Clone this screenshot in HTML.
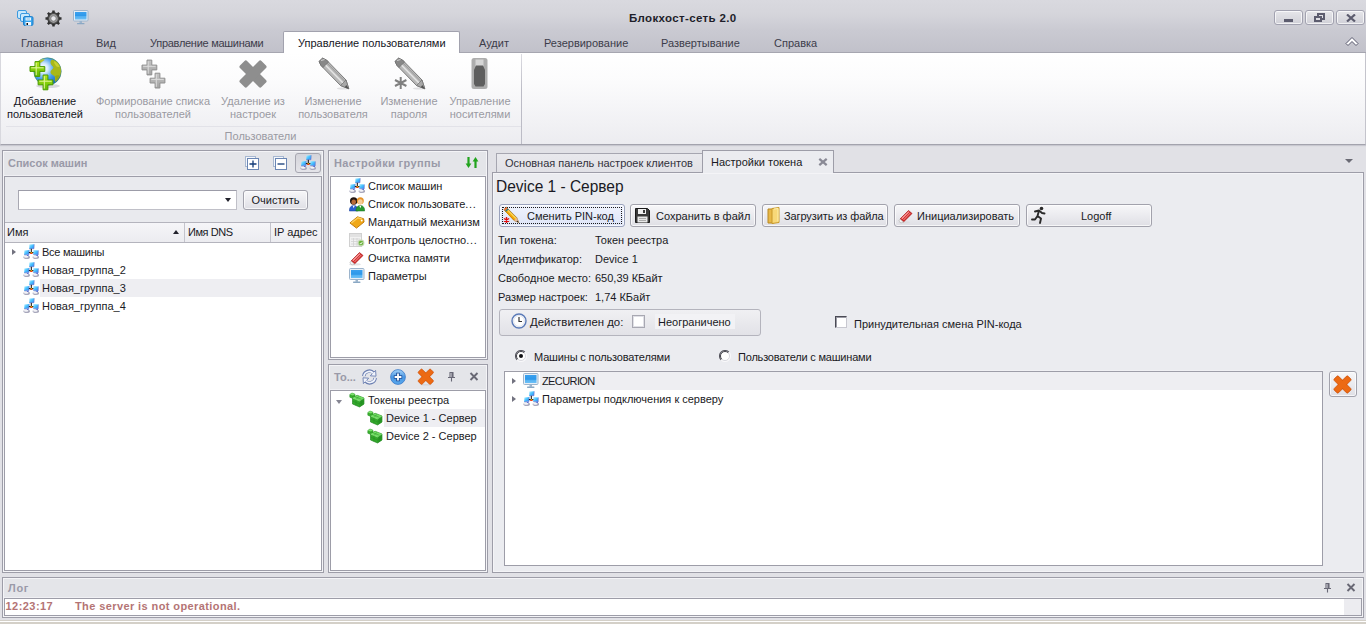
<!DOCTYPE html>
<html><head><meta charset="utf-8">
<style>
*{box-sizing:border-box;margin:0;padding:0}
html,body{width:1366px;height:624px;overflow:hidden}
body{position:relative;background:#e1e1e6;font-family:"Liberation Sans","DejaVu Sans",sans-serif;font-size:11px;color:#1a1a24;line-height:13px}
.a{position:absolute}
.t{position:absolute;white-space:nowrap}
#title{left:0;top:0;width:1366px;height:53px;background:linear-gradient(#d9d9df 0,#d5d5db 14px,#cacad2 30px,#c1c1ca 52px);border-bottom:1px solid #a6a6b0}
#ribbon{left:0;top:53px;width:1366px;height:92px;border-left:1px solid #d8d8de;border-right:1px solid #c4c4cc;box-shadow:0 1px 1px #c8c8d0;background:linear-gradient(#ffffff 0,#fbfbfc 30px,#ececf0 100%);border-bottom:1px solid #a3a3ad}
.tab{position:absolute;top:37px;white-space:nowrap;color:#3c3c4a;font-size:11px}
.rb{position:absolute;text-align:center;white-space:nowrap;color:#9a9aa2;font-size:11px;line-height:13px}
.panel{position:absolute;background:#e4e5e9;border:1px solid #9d9da8;box-shadow:inset 0 0 0 1px #f4f4f7}
.inner{position:absolute;background:#fff;border:1px solid #9d9da8;box-shadow:0 -1px 0 #f0f0f4}
.cap{margin-top:1px;position:absolute;white-space:nowrap;font-weight:bold;color:#9a9aa8;font-size:11px}
.btn{position:absolute;border:1px solid #a2a2ac;border-radius:3px;box-shadow:inset 0 0 0 1px rgba(255,255,255,0.7);background:linear-gradient(#f7f7f9,#dfdfe5);white-space:nowrap}
</style></head><body>
<svg width="0" height="0" style="position:absolute"><defs>
<symbol id="net" viewBox="0 0 16 16"><linearGradient id="ng" x1="0" y1="0" x2="1" y2="1"><stop offset="0" stop-color="#b4f0ff"/><stop offset="0.450" stop-color="#4cc4ff"/><stop offset="1" stop-color="#2a80f4"/></linearGradient>
<ellipse cx="3.700" cy="13.200" rx="3.300" ry="1.800" fill="#a8a8bc"/><ellipse cx="3.100" cy="12.700" rx="2.300" ry="1" fill="#f4f4f8"/>
<ellipse cx="12.900" cy="13.200" rx="3.300" ry="1.800" fill="#a8a8bc"/><ellipse cx="12.300" cy="12.700" rx="2.300" ry="1" fill="#f4f4f8"/>
<path d="M6.400 0.500L11.200 0.200L11 4.700L6.200 4.900z" fill="url(#ng)"/><path d="M11.200 0.200L11 4.700L6.200 4.900" stroke="#7878c8" stroke-width="0.600" fill="none"/>
<path d="M1.400 6.400L6.200 6.100L6 10.600L1.100 10.900z" fill="url(#ng)"/><path d="M6.200 6.100L6 10.600L1.100 10.900" stroke="#7878c8" stroke-width="0.600" fill="none"/>
<path d="M10.400 6.100L15.400 6.400L15.200 10.900L10.200 10.600z" fill="url(#ng)"/><path d="M15.400 6.400L15.200 10.900L10.200 10.600" stroke="#7878c8" stroke-width="0.600" fill="none"/>
<path d="M8.300 4.800V8.600M5.900 8.600H10.400" stroke="#0a0a0a" stroke-width="1" fill="none"/>
<path d="M7.200 9h2.300v1H7.200z" fill="#e82010"/><path d="M7.500 8.100h1.700v1.100H7.500z" fill="#f4b400"/>
<rect x="4.400" y="11" width="1" height="1" fill="#1030d0"/><rect x="13.600" y="11" width="1" height="1" fill="#1030d0"/></symbol>
<symbol id="tok" viewBox="0 0 16 16">
<path d="M0.800 2.500L3 1L6 2.200L6 5L3.800 6.500L0.800 5.200z" fill="#3cb030" stroke="#1e8a1e" stroke-width="0.500"/><path d="M0.800 2.500L3 1L6 2.200L3.800 3.600z" fill="#7ee070"/><path d="M3.800 3.600V6.500" stroke="#1e8a1e" stroke-width="0.500"/>
<path d="M3.500 6L8 3.200L15 6V12L10.500 15L3.500 12z" fill="#34a82c" stroke="#1a7e1a" stroke-width="0.600" stroke-linejoin="round"/>
<path d="M3.500 6L8 3.200L15 6L10.500 9z" fill="#72dc64"/><path d="M10.500 9V15L15 12V6z" fill="#2a9826"/>
<path d="M5.700 4.600L12.700 7.500M10.200 4.100L7 7.500M7 7.500V13.500M3.500 9L10.500 12L15 9M12.700 7.500V13.500" stroke="#1e8a1e" stroke-width="0.450" fill="none"/>
<path d="M3.500 6L10.500 9L15 6" stroke="#a8f09a" stroke-width="0.500" fill="none"/></symbol>
</defs></svg>
<!-- TITLE -->
<div class="a" id="title"></div>
<div class="t" style="left:629px;top:12px;font-weight:bold;font-size:11.500px;line-height:13px;letter-spacing:0.350px;color:#1e1e2a">Блокхост-сеть 2.0</div>
<div class="tab" style="left:21px">Главная</div>
<div class="tab" style="left:96px">Вид</div>
<div class="tab" style="left:150px;letter-spacing:-0.280px">Управление машинами</div>
<div class="a" style="left:283px;top:31px;width:177px;height:22px;background:#fff;border:1px solid #a2a2ae;border-bottom:none;border-radius:2px 2px 0 0"></div>
<div class="tab" style="left:298px;color:#16161e">Управление пользователями</div>
<div class="tab" style="left:479px">Аудит</div>
<div class="tab" style="left:544px">Резервирование</div>
<div class="tab" style="left:661px">Развертывание</div>
<div class="tab" style="left:774px">Справка</div>
<!-- RIBBON -->
<div class="a" id="ribbon"></div>
<div class="a" style="left:284px;top:52px;width:175px;height:1px;background:#fff"></div>
<!-- window buttons -->
<div class="btn" style="left:1274px;top:10px;width:29px;height:15px;border-color:#a2a2b0;background:linear-gradient(#e6e6ea,#d0d0d7)"><div class="a" style="left:9px;top:8px;width:9px;height:3px;background:#5c5c6e"></div></div>
<div class="btn" style="left:1305px;top:10px;width:29px;height:15px;border-color:#a2a2b0;background:linear-gradient(#e6e6ea,#d0d0d7)">
<div class="a" style="left:11px;top:2px;width:8px;height:7px;border:2px solid #5c5c6e"></div>
<div class="a" style="left:8px;top:5px;width:8px;height:6px;border:2px solid #5c5c6e;background:#dcdce2"></div></div>
<div class="btn" style="left:1336px;top:10px;width:29px;height:15px;border-color:#a2a2b0;background:linear-gradient(#e6e6ea,#d0d0d7)">
<svg class="a" style="left:8px;top:3px" width="12" height="8" viewBox="0 0 12 8"><path d="M2 0.500L10 7.500M10 0.500L2 7.500" stroke="#5c5c6e" stroke-width="2.200"/></svg></div>
<svg class="a" style="left:1345px;top:36px" width="14" height="11" viewBox="0 0 14 11"><path d="M1 7.500L7 1.500L13 7.500L11 9.500L7 5.500L3 9.500z" fill="#fff" stroke="#55556a" stroke-width="1" stroke-linejoin="round"/></svg>
<!-- quick access icons -->
<svg class="a" style="left:16px;top:9px" width="18" height="17" viewBox="0 0 18 17">
<rect x="1.500" y="1.500" width="9" height="8" rx="1.500" fill="#c8e8fc" stroke="#3a9ae0"/>
<rect x="4.500" y="4.500" width="9" height="8" rx="1.500" fill="#c8e8fc" stroke="#3a9ae0"/>
<rect x="7.500" y="7.500" width="9.500" height="9" rx="1.500" fill="#38a4ec" stroke="#1f80cc"/>
<rect x="9.500" y="8.500" width="5.500" height="3" fill="#e8f4fc"/><path d="M10.500 10h3.500" stroke="#58a8e0" stroke-width="0.700"/><rect x="9.500" y="13" width="5.500" height="3.500" fill="#f4f8fc"/><rect x="10.500" y="14" width="1.500" height="2" fill="#101010"/></svg>
<svg class="a" style="left:44.500px;top:9.500px" width="17" height="17" viewBox="0 0 17 17"><path d="M16.51 7.30L16.51 9.70L14.66 9.83L13.79 11.92L15.02 13.31L13.31 15.02L11.92 13.79L9.83 14.66L9.70 16.51L7.30 16.51L7.17 14.66L5.08 13.79L3.69 15.02L1.98 13.31L3.21 11.92L2.34 9.83L0.49 9.70L0.49 7.30L2.34 7.17L3.21 5.08L1.98 3.69L3.69 1.98L5.08 3.21L7.17 2.34L7.30 0.49L9.70 0.49L9.83 2.34L11.92 3.21L13.31 1.98L15.02 3.69L13.79 5.08L14.66 7.17z" fill="#303030"/><circle cx="8.500" cy="8.500" r="5" fill="#9c9c9c" stroke="#4a4a4a" stroke-width="1.200"/><circle cx="8.500" cy="8.500" r="2.700" fill="#e6e6ea" stroke="#6a6a6a" stroke-width="0.700"/></svg>
<svg class="a" style="left:73px;top:10px" width="16" height="15" viewBox="0 0 16 15">
<defs><linearGradient id="scr" x1="0" y1="0" x2="0" y2="1"><stop offset="0" stop-color="#3aa0ee"/><stop offset="0.550" stop-color="#2c98ea"/><stop offset="0.600" stop-color="#52b0f2"/><stop offset="1" stop-color="#6cc0f6"/></linearGradient></defs>
<rect x="0.500" y="0.500" width="14.500" height="10.500" rx="1" fill="#e4edf6" stroke="#9cb4cc"/>
<rect x="2" y="2" width="11.500" height="7.500" fill="url(#scr)"/>
<rect x="6.500" y="11" width="2.500" height="2" fill="#9cb4cc"/><rect x="4" y="13" width="7.500" height="1.200" rx="0.500" fill="#8aa8c4"/></svg>
<!-- ribbon big icons -->
<svg class="a" style="left:0;top:54px" width="530" height="42" viewBox="0 54 530 42">
<defs><radialGradient id="gl" cx="0.35" cy="0.38" r="0.65"><stop offset="0" stop-color="#ffffff"/><stop offset="0.25" stop-color="#d8ecfc"/><stop offset="0.6" stop-color="#4aa0ea"/><stop offset="1" stop-color="#1268c8"/></radialGradient>
<linearGradient id="gp" x1="0" y1="0" x2="0" y2="1"><stop offset="0" stop-color="#b4e81a"/><stop offset="1" stop-color="#5cb800"/></linearGradient>
<linearGradient id="gg" x1="0" y1="0" x2="0" y2="1"><stop offset="0" stop-color="#c4c4c4"/><stop offset="1" stop-color="#a4a4a4"/></linearGradient></defs>
<ellipse cx="48" cy="86" rx="12" ry="2" fill="#d8d8dc"/>
<circle cx="47.500" cy="71.500" r="13.700" fill="url(#gl)" stroke="#3a8a5a" stroke-width="0.600"/>
<path d="M52 59.500c3 0.500 6 2.500 7.500 5.500c1.500 3 2 6 1 9.500c-1 3-3 6-5.500 7.500c-0.500-2 0.500-4-0.500-6c-1.500-1-4-1.500-4-4c0-2 2.500-2.500 3-4.500c-1-2-3-2.500-3-5c0-1.500 0.500-2.500 1.500-3z" fill="#a8b818"/>
<path d="M54 61c2.500 1 4.500 3 5.500 5.500c-1 1-2.500 0.500-3.500-0.500c-1-1.500-2-3-2-5z" fill="#c8d030"/>
<path d="M38 61.500c2-1.500 4.500-2.500 6.500-2c0 1-1.500 1.500-2.500 2.500c-1 1-2.500 1-4-0.500z" fill="#b8c828"/>
<path d="M55 76c1 1.500 1 3.500 0 5.500c2-1.500 3.500-3.500 4.500-6c-1.500-0.500-3-0.500-4.500 0.500z" fill="#98a810"/>
<path d="M35.0 61.6L39.8 61.6L39.8 66.6L44.8 66.6L44.8 71.4L39.8 71.4L39.8 76.4L35.0 76.4L35.0 71.4L30.0 71.4L30.0 66.6L35.0 66.6z" fill="url(#gp)" stroke="#4a9a00" stroke-width="1" stroke-linejoin="round"/><path d="M31.2 67.8h12.4M36.2 62.8v12.4" stroke="#e4f8a0" stroke-width="1" fill="none"/><path d="M43.1 75.0L47.9 75.0L47.9 80.0L52.9 80.0L52.9 84.8L47.9 84.8L47.9 89.8L43.1 89.8L43.1 84.8L38.1 84.8L38.1 80.0L43.1 80.0z" fill="url(#gp)" stroke="#4a9a00" stroke-width="1" stroke-linejoin="round"/><path d="M39.3 81.2h12.4M44.3 76.2v12.4" stroke="#e4f8a0" stroke-width="1" fill="none"/><path d="M147.0 60.1L151.8 60.1L151.8 65.1L156.8 65.1L156.8 69.9L151.8 69.9L151.8 74.9L147.0 74.9L147.0 69.9L142.0 69.9L142.0 65.1L147.0 65.1z" fill="url(#gg)" stroke="#909090" stroke-width="1" stroke-linejoin="round"/><path d="M143.2 66.3h12.4M148.2 61.3v12.4" stroke="#dcdcdc" stroke-width="1" fill="none"/><path d="M155.1 73.2L159.9 73.2L159.9 78.2L164.9 78.2L164.9 83.0L159.9 83.0L159.9 88.0L155.1 88.0L155.1 83.0L150.1 83.0L150.1 78.2L155.1 78.2z" fill="url(#gg)" stroke="#909090" stroke-width="1" stroke-linejoin="round"/><path d="M151.3 79.4h12.4M156.3 74.4v12.4" stroke="#dcdcdc" stroke-width="1" fill="none"/>
<g transform="translate(253 74) rotate(45)"><rect x="-15.200" y="-5" width="30.400" height="10" rx="1.800" fill="#8e8e8e"/><rect x="-5" y="-15.200" width="10" height="30.400" rx="1.800" fill="#8e8e8e"/></g>
<g id="pen"><ellipse cx="343" cy="88.500" rx="6" ry="1" fill="#e0e0e2"/>
<path d="M319 61.500L322.500 58.200L326.500 60L346 80L348.800 88.800L340.500 85.500L321 65.500z" fill="#b8b8b8" stroke="#707070" stroke-width="0.900" stroke-linejoin="round"/>
<path d="M322 61.500L343.500 83.500" stroke="#e4e4e4" stroke-width="1.600"/><path d="M324.500 60.500L345 81.500" stroke="#9a9a9a" stroke-width="1"/>
<path d="M319 61.500L322.500 58.200L326.500 60L328.500 62L323 67.500L321 65.500z" fill="#888" stroke="#6a6a6a" stroke-width="0.600"/>
<path d="M321 60.500L324.500 59.500" stroke="#d0d0d0" stroke-width="1.200"/>
<path d="M346 80L340.500 85.500L348.800 88.800z" fill="#a8a8a8" stroke="#707070" stroke-width="0.700"/>
<path d="M346.300 85L348.800 88.800L344.800 87.200z" fill="#505050"/></g>
<use href="#pen" x="76" y="0"/>
<path d="M400.700 77v12M395 80l11.400 6M406.400 80l-11.400 6" stroke="#808080" stroke-width="2"/>
<rect x="471.500" y="58" width="16" height="31" rx="2.500" fill="#adadad"/>
<rect x="475.500" y="59.500" width="8" height="7" fill="#d6d6d6"/>
<path d="M474 70l2-4.500h7l2 4.500v14l-1.500 2.500h-8L474 84z" fill="#5e5e5e"/>
</svg>
<!-- ribbon labels -->
<div class="rb" style="left:0;top:95px;width:90px;color:#16161e">Добавление<br>пользователей</div>
<div class="rb" style="left:93px;top:95px;width:120px">Формирование списка<br>пользователей</div>
<div class="rb" style="left:213px;top:95px;width:80px">Удаление из<br>настроек</div>
<div class="rb" style="left:293px;top:95px;width:80px">Изменение<br>пользователя</div>
<div class="rb" style="left:369px;top:95px;width:80px">Изменение<br>пароля</div>
<div class="rb" style="left:440px;top:95px;width:80px">Управление<br>носителями</div>
<div class="a" style="left:6px;top:126px;width:515px;height:1px;background:#e2e2e8"></div>
<div class="rb" style="left:0;top:130px;width:521px">Пользователи</div>
<div class="a" style="left:521px;top:54px;width:1px;height:90px;background:linear-gradient(#dcdce2,#bcbcc6 40%)"></div>
<!--RIBBONCONTENT-->
<!-- LEFT PANEL -->
<div class="panel" style="left:2px;top:150px;width:322px;height:423px"></div>
<div class="cap" style="left:8px;top:156px">Список машин</div>
<div class="inner" style="left:4px;top:176px;width:318px;height:395px;background:#e9eaee"></div>
<div class="a" style="left:5px;top:243px;width:316px;height:327px;background:#fff"></div>
<div class="a" style="left:18px;top:190px;width:219px;height:20px;background:#fff;border:1px solid #c0c0c8;border-top-color:#9c9ca8;border-left-color:#a8a8b2"></div>
<div class="a" style="left:225px;top:198px;border:3.5px solid transparent;border-top:4px solid #22222c;border-bottom:none"></div>
<div class="btn" style="left:243px;top:190px;width:65px;height:20px;text-align:center;line-height:18px">Очистить</div>
<div class="a" style="left:5px;top:223px;width:316px;height:19px;background:linear-gradient(#f5f5f8,#ececf0)"></div><div class="a" style="left:5px;top:222px;width:316px;height:1px;background:#b4b4bd"></div>
<div class="a" style="left:5px;top:242px;width:316px;height:1px;background:#b4b4bd"></div>
<div class="a" style="left:184px;top:223px;width:1px;height:19px;background:#c4c4cc"></div>
<div class="a" style="left:270px;top:223px;width:1px;height:19px;background:#c4c4cc"></div>
<div class="t" style="left:7px;top:226px">Имя</div>
<div class="t" style="left:188px;top:226px;letter-spacing:-0.450px">Имя DNS</div>
<div class="t" style="left:274px;top:226px">IP адрес</div>
<div class="a" style="left:173px;top:230px;border:3.5px solid transparent;border-bottom:4px solid #22222c;border-top:none"></div>
<div class="a" style="left:40px;top:279px;width:281px;height:18px;background:#eeeef2"></div>
<div class="a" style="left:12px;top:249px;border:3.500px solid transparent;border-left:4px solid #72727f;border-right:none"></div>
<div class="t" style="left:42px;top:246px;letter-spacing:-0.250px">Все машины</div>
<div class="t" style="left:42px;top:264px">Новая_группа_2</div>
<div class="t" style="left:42px;top:282px">Новая_группа_3</div>
<div class="t" style="left:42px;top:300px">Новая_группа_4</div>
<svg class="a" style="left:23px;top:244px" width="16" height="16"><use href="#net"/></svg>
<svg class="a" style="left:23px;top:262px" width="16" height="16"><use href="#net"/></svg>
<svg class="a" style="left:23px;top:280px" width="16" height="16"><use href="#net"/></svg>
<svg class="a" style="left:23px;top:298px" width="16" height="16"><use href="#net"/></svg>
<!-- caption buttons left -->
<svg class="a" style="left:245px;top:156px" width="14" height="14" viewBox="0 0 14 14"><rect x="0.500" y="0.500" width="10" height="10" fill="#f4f7fc" stroke="#a8b8d0"/><rect x="2.500" y="2.500" width="11" height="11" fill="#fff" stroke="#6a86b4"/><path d="M8 4.500v7M4.500 8h7" stroke="#123a78" stroke-width="1.300"/></svg>
<svg class="a" style="left:273px;top:156px" width="14" height="14" viewBox="0 0 14 14"><rect x="0.500" y="0.500" width="10" height="10" fill="#f4f7fc" stroke="#a8b8d0"/><rect x="2.500" y="2.500" width="11" height="11" fill="#fff" stroke="#6a86b4"/><path d="M4.500 8h7" stroke="#123a78" stroke-width="1.300"/></svg>
<div class="a" style="left:295px;top:153px;width:26px;height:20px;border:1px solid #a6a6b0;border-radius:3px;background:linear-gradient(#d4d4da,#e4e4e9)"></div>
<svg class="a" style="left:300px;top:155px" width="16" height="16"><use href="#net"/></svg>
<!-- MIDDLE TOP PANEL -->
<div class="panel" style="left:328px;top:150px;width:160px;height:210px"></div>
<div class="cap" style="left:334px;top:156px;letter-spacing:0.35px">Настройки группы</div>
<div class="inner" style="left:330px;top:176px;width:156px;height:182px"></div>
<svg class="a" style="left:465px;top:156px" width="14" height="13" viewBox="0 0 14 13"><path d="M3.500 1v8" stroke="#22a41e" stroke-width="2.200"/><path d="M0.600 7.500h5.800L3.500 12z" fill="#22a41e"/><path d="M10.500 12V4" stroke="#22a41e" stroke-width="2.200"/><path d="M7.600 5.500h5.800L10.500 1z" fill="#22a41e"/></svg>
<div class="t" style="left:368px;top:180px">Список машин</div>
<div class="t" style="left:368px;top:198px">Список пользовате<span style="letter-spacing:0.700px">...</span></div>
<div class="t" style="left:368px;top:216px">Мандатный механизм</div>
<div class="t" style="left:368px;top:234px">Контроль целостно<span style="letter-spacing:0.700px">...</span></div>
<div class="t" style="left:368px;top:252px">Очистка памяти</div>
<div class="t" style="left:368px;top:270px">Параметры</div>
<svg class="a" style="left:349px;top:178px" width="16" height="16"><use href="#net"/></svg>
<svg class="a" style="left:349px;top:196px" width="16" height="16" viewBox="0 0 16 16">
<path d="M0.300 15c0-3.600 1.700-5.500 4.400-5.500s4.400 1.900 4.400 5.500z" fill="#2860d0" stroke="#1a3e98" stroke-width="0.500"/><path d="M3.700 9.800l1 2.400l1-2.400z" fill="#fff"/>
<circle cx="4.700" cy="5" r="3.700" fill="#201410"/><ellipse cx="4.700" cy="6" rx="2.300" ry="2.600" fill="#b86a38"/>
<path d="M6.900 15c0-3.600 1.700-5.500 4.400-5.500s4.400 1.900 4.400 5.500z" fill="#2a9a30" stroke="#1a6e20" stroke-width="0.500"/><path d="M10.300 9.800l1 2.400l1-2.400z" fill="#fff"/>
<circle cx="11.300" cy="4.800" r="3.500" fill="#e89428"/><ellipse cx="11.300" cy="5.800" rx="2.400" ry="2.600" fill="#f6cc98"/></svg>
<svg class="a" style="left:349px;top:214px" width="16" height="16" viewBox="0 0 17 16"><path d="M1 9L9 2.500L15.500 4.500L16 8L8 14.500z" fill="#f0a818" stroke="#c07808" stroke-width="1" stroke-linejoin="round"/><path d="M2.500 9L9.500 3.500L14 5" stroke="#fbd060" stroke-width="1.400" fill="none"/><circle cx="13.500" cy="6.500" r="1" fill="#fff"/></svg>
<svg class="a" style="left:349px;top:232px" width="16" height="16" viewBox="0 0 16 16"><rect x="0.500" y="1.500" width="12" height="13" fill="#f2f2f2" stroke="#d0d0d0"/><rect x="1" y="2" width="11" height="3" fill="#e2e2e2"/><path d="M2 7h9M2 9.500h9M2 12h9M4.500 6v8M8 6v8" stroke="#d2d2d2" stroke-width="0.800"/><circle cx="12" cy="11" r="3.400" fill="#c4d8b4"/><circle cx="12" cy="11" r="2.300" fill="#6cb43c"/><path d="M10.800 11l1 1.100l1.500-2" stroke="#fff" stroke-width="0.900" fill="none"/></svg>
<svg class="a" style="left:349px;top:250px" width="16" height="16" viewBox="0 0 16 16"><ellipse cx="6" cy="14.300" rx="6" ry="1.200" fill="#e4e4e6"/><path d="M2 11L10.500 2.500L14 5.500L5.500 14z" fill="#d42424" stroke="#a81818" stroke-width="0.700" stroke-linejoin="round"/><path d="M3.800 10.800L11 3.600" stroke="#f8a0a0" stroke-width="1.300"/><path d="M5.500 12L12.300 5" stroke="#f4d0d0" stroke-width="0.700"/><path d="M2 11L5.500 14L3 15L0.800 13z" fill="#f4f4f4" stroke="#b0b0b0" stroke-width="0.600" stroke-linejoin="round"/></svg>
<svg class="a" style="left:349px;top:268px" width="16" height="16" viewBox="0 0 16 16"><rect x="0.500" y="0.500" width="14.500" height="11" rx="1" fill="#e8eff6" stroke="#9cb4cc"/><rect x="2" y="2" width="11.500" height="8" fill="url(#scr)"/><rect x="6.500" y="11.500" width="2.500" height="2.300" fill="#9cb4cc"/><rect x="4" y="13.600" width="7.500" height="1.300" rx="0.600" fill="#8aa8c4"/></svg>
<!-- MIDDLE BOTTOM PANEL -->
<div class="panel" style="left:328px;top:364px;width:160px;height:209px"></div>
<div class="cap" style="left:334px;top:370px">То...</div>
<div class="inner" style="left:330px;top:390px;width:156px;height:181px"></div>
<div class="a" style="left:384px;top:409px;width:101px;height:18px;background:#eeeef2"></div>
<div class="a" style="left:336px;top:400px;border:3.500px solid transparent;border-top:4px solid #858592;border-bottom:none"></div>
<div class="t" style="left:368px;top:394px">Токены реестра</div>
<div class="t" style="left:386px;top:412px">Device 1 - Сервер</div>
<div class="t" style="left:386px;top:430px">Device 2 - Сервер</div>
<svg class="a" style="left:349px;top:392px" width="16" height="16"><use href="#tok"/></svg>
<svg class="a" style="left:367px;top:410px" width="16" height="16"><use href="#tok"/></svg>
<svg class="a" style="left:367px;top:428px" width="16" height="16"><use href="#tok"/></svg>
<svg class="a" style="left:361px;top:369px" width="17" height="16" viewBox="0 0 17 16"><g fill="none" stroke-linecap="butt"><path d="M2.800 7.200A5.600 5.600 0 0 1 12.600 4" stroke="#6a7eb0" stroke-width="3.400"/><path d="M14.200 8.800A5.600 5.600 0 0 1 4.400 12" stroke="#6a7eb0" stroke-width="3.400"/></g><path d="M9.300 6.800L15 7.200L14.600 1.400z" fill="#f2f5fc" stroke="#6a7eb0" stroke-width="0.900" stroke-linejoin="round"/><path d="M7.700 9.200L2 8.800L2.400 14.600z" fill="#f2f5fc" stroke="#6a7eb0" stroke-width="0.900" stroke-linejoin="round"/><g fill="none"><path d="M2.800 7A5.600 5.600 0 0 1 12.400 4.200" stroke="#f2f5fc" stroke-width="1.600"/><path d="M14.200 9A5.600 5.600 0 0 1 4.600 11.800" stroke="#f2f5fc" stroke-width="1.600"/></g></svg>
<svg class="a" style="left:390px;top:369px" width="16" height="16" viewBox="0 0 16 16"><defs><linearGradient id="pc" x1="0" y1="0" x2="0" y2="1"><stop offset="0" stop-color="#a8d4f8"/><stop offset="0.500" stop-color="#4a98e4"/><stop offset="1" stop-color="#5aa8ec"/></linearGradient></defs><circle cx="8" cy="8" r="7.400" fill="url(#pc)" stroke="#3a78c8" stroke-width="0.800"/><path d="M8 3.800v8.400M3.800 8h8.400" stroke="#1e4e98" stroke-width="3.600"/><path d="M8 4.600v6.800M4.600 8h6.800" stroke="#fff" stroke-width="1.800"/></svg>
<svg class="a" style="left:417px;top:368px" width="18" height="18" viewBox="0 0 18 18"><ellipse cx="9" cy="16.800" rx="6" ry="0.800" fill="#d4d4d8"/><g transform="translate(8.800 8.700) rotate(45) scale(0.940)"><rect x="-9.300" y="-2.900" width="18.600" height="5.800" rx="1.200" fill="#e8600c" stroke="#c84c04" stroke-width="0.600"/><rect x="-2.900" y="-9.300" width="5.800" height="18.600" rx="1.200" fill="#e8600c" stroke="#c84c04" stroke-width="0.600"/><rect x="-8.800" y="-2.400" width="17.600" height="4.800" rx="1" fill="#ec6a14"/><rect x="-2.400" y="-8.800" width="4.800" height="17.600" rx="1" fill="#ec6a14"/></g></svg>
<svg class="a" style="left:447px;top:372px" width="9" height="10" viewBox="0 0 9 10"><path d="M2.500 0.500h4M3 0.500v4.500M6 0.500v4.500M5 1v4M1 5.500h7M4.500 6v3.500" stroke="#686876" stroke-width="1.100" fill="none"/></svg>
<svg class="a" style="left:469px;top:372px" width="10" height="9" viewBox="0 0 10 9"><path d="M1.500 1L8.500 8M8.500 1L1.500 8" stroke="#686874" stroke-width="1.900"/></svg>
<!-- RIGHT PANEL -->
<div class="panel" style="left:492px;top:172px;width:872px;height:401px;background:#ebecf0"></div>
<div class="a" style="left:496px;top:153px;width:207px;height:19px;border:1px solid #a6a6b0;border-bottom:none;background:linear-gradient(#e9e9ed,#e1e1e6)"></div>
<div class="a" style="left:702px;top:150px;width:132px;height:23px;border:1px solid #9d9da8;border-bottom:none;background:#ebecf0"></div>
<div class="t" style="left:505px;top:157px;color:#32323c">Основная панель настроек клиентов</div>
<div class="t" style="left:711px;top:156px">Настройки токена</div>
<svg class="a" style="left:817.500px;top:158px" width="10" height="8" viewBox="0 0 10 8"><path d="M1.300 0.800L8.700 7.200M8.700 0.800L1.300 7.200" stroke="#8a8a96" stroke-width="2.200"/></svg>
<div class="a" style="left:1345px;top:159px;border:4px solid transparent;border-top:4px solid #6a6a74;border-bottom:none"></div>
<div class="t" id="hdr" style="left:496px;top:177px;font-size:17px;line-height:20px;transform:scaleX(0.910);transform-origin:0 0">Device 1 - Сервер</div>
<!-- buttons -->
<div class="btn" style="left:499px;top:204px;width:126px;height:23px;background:linear-gradient(#f0f3fd,#dde4f7);border-color:#9aa2bc"><div class="a" style="left:2px;top:2px;right:2px;bottom:2px;border:1px dotted #1a1a1a"></div><span class="t" style="left:27px;top:5px">Сменить PIN-код</span></div>
<div class="btn" style="left:630px;top:204px;width:126px;height:23px"><span class="t" style="left:25px;top:5px">Сохранить в файл</span></div>
<div class="btn" style="left:762px;top:204px;width:126px;height:23px"><span class="t" style="left:21px;top:5px;letter-spacing:-0.100px">Загрузить из файла</span></div>
<div class="btn" style="left:894px;top:204px;width:126px;height:23px"><span class="t" style="left:22px;top:5px">Инициализировать</span></div>
<div class="btn" style="left:1026px;top:204px;width:126px;height:23px"><span class="t" style="left:54px;top:5px">Logoff</span></div>
<svg class="a" style="left:502px;top:206px" width="19" height="19" viewBox="502 206 19 19">
<path d="M503.800 209.500L506.300 207.200L516.800 217.700L518.800 222.500L514 220.500z" fill="#f2aa08" stroke="#8a5a10" stroke-width="0.600" stroke-linejoin="round"/>
<path d="M506.500 209L516 218.500" stroke="#fcd860" stroke-width="1.200"/>
<path d="M504.800 210.700L514.300 220.200" stroke="#d88a04" stroke-width="1"/>
<path d="M503.800 209.500L506.300 207.200L507.600 208.500L505.100 210.800z" fill="#f07040"/>
<path d="M505.100 210.800L507.600 208.500L508.600 209.500L506.100 211.800z" fill="#2a7a80"/>
<path d="M514 220.500L516.800 217.700L518.800 222.500z" fill="#e4b898"/>
<path d="M517.300 220.600L518.900 222.600L516.600 221.800z" fill="#2a2a2a"/>
<path d="M506.500 217v6M503.900 218.500l5.200 3M509.100 218.500l-5.200 3" stroke="#e00c0c" stroke-width="1.400"/></svg>
<svg class="a" style="left:635px;top:208px" width="15" height="15" viewBox="0 0 15 15"><path d="M0.500 0.500h12l2 2v12h-14z" fill="#3a3a3a" stroke="#1a1a1a"/><rect x="3" y="1" width="8" height="5" fill="#f0f0f0"/><rect x="8" y="2" width="2" height="3" fill="#3a3a3a"/><rect x="2.500" y="8.500" width="10" height="6" fill="#e8e8e8"/><path d="M4 10.500h7M4 12.500h7" stroke="#9a9a9a" stroke-width="0.800"/></svg>
<svg class="a" style="left:767px;top:207px" width="14" height="17" viewBox="0 0 14 17"><path d="M1 2h6v14h-6z" fill="#e8b848" stroke="#b88820"/><path d="M5 1.500l7-1v15l-7 1z" fill="#f8d878" stroke="#c89828" stroke-linejoin="round"/><path d="M7 2l4-0.500v13" stroke="#fff0b0" stroke-width="1" fill="none"/></svg>
<svg class="a" style="left:898px;top:208px" width="16" height="16" viewBox="0 0 16 16"><ellipse cx="6" cy="14.300" rx="6" ry="1.200" fill="#dcdce0"/><path d="M2 11L10.500 2.500L14 5.500L5.500 14z" fill="#d42424" stroke="#a81818" stroke-width="0.700" stroke-linejoin="round"/><path d="M3.800 10.800L11 3.600" stroke="#f8a0a0" stroke-width="1.300"/><path d="M5.500 12L12.300 5" stroke="#f4d0d0" stroke-width="0.700"/><path d="M2 11L5.500 14L3 15L0.800 13z" fill="#f4f4f4" stroke="#b0b0b0" stroke-width="0.600" stroke-linejoin="round"/></svg>
<svg class="a" style="left:1031px;top:206px" width="16" height="18" viewBox="0 0 16 18"><circle cx="10.500" cy="2.500" r="1.800" fill="#2a2a2a"/><path d="M4 5.500l4-1l3 2.500l2.500 0.500M8 4.500L6.500 10l3.500 2.500l-1 4.500M6.500 10L4 13.500H1" fill="none" stroke="#2a2a2a" stroke-width="1.900" stroke-linecap="round" stroke-linejoin="round"/></svg>
<!-- info -->
<div class="t" style="left:498px;top:234px">Тип токена:</div><div class="t" style="left:595px;top:234px">Токен реестра</div>
<div class="t" style="left:498px;top:253px">Идентификатор:</div><div class="t" style="left:595px;top:253px">Device 1</div>
<div class="t" style="left:498px;top:272px">Свободное место:</div><div class="t" style="left:595px;top:272px">650,39 КБайт</div>
<div class="t" style="left:498px;top:291px">Размер настроек:</div><div class="t" style="left:595px;top:291px">1,74 КБайт</div>
<!-- valid until -->
<div class="a" style="left:499px;top:309px;width:262px;height:27px;border:1px solid #b4b4bd;border-radius:3px;background:linear-gradient(#f0f0f3,#e2e2e7)"></div>
<svg class="a" style="left:511px;top:313px" width="16" height="16" viewBox="0 0 16 16"><circle cx="8" cy="8" r="7" fill="#fafafa" stroke="#5a7ab8" stroke-width="1.400"/><circle cx="8" cy="8" r="5.400" fill="#fff" stroke="#c8d0e0" stroke-width="0.600"/><path d="M8 4v4.500h3" fill="none" stroke="#333" stroke-width="1.200"/></svg>
<div class="t" style="left:530px;top:316px;font-size:11.400px">Действителен до:</div>
<div class="a" style="left:632px;top:315px;width:13px;height:13px;border:1px solid #a8a8b2;background:#fff;box-shadow:inset 0 0 0 1px #e0e0e6"></div>
<div class="a" style="left:655px;top:314px;width:80px;height:15px;background:#f2f2f5"></div>
<div class="t" style="left:658px;top:316px">Неограничено</div>
<div class="a" style="left:835px;top:316px;width:12px;height:12px;border:1px solid #4a4a54;border-right-color:#c8c8d0;border-bottom-color:#c8c8d0;background:#fff;box-shadow:inset 1px 1px 0 #9a9aa4"></div>
<div class="t" style="left:854px;top:318px">Принудительная смена PIN-кода</div>
<!-- radios -->
<svg class="a" style="left:515px;top:350px" width="12" height="12" viewBox="0 0 12 12"><circle cx="6" cy="6" r="5" fill="#fff"/><path d="M2.100 9.900A5.500 5.500 0 0 1 9.900 2.100" fill="none" stroke="#55555e" stroke-width="1.100"/><path d="M2.800 9.200A4.500 4.500 0 0 1 9.200 2.800" fill="none" stroke="#2e2e36" stroke-width="0.900"/><path d="M9.900 2.100A5.500 5.500 0 0 1 2.100 9.900" fill="none" stroke="#f8f8fa" stroke-width="1.100"/><path d="M9.200 2.800A4.500 4.500 0 0 1 2.800 9.200" fill="none" stroke="#d4d4da" stroke-width="0.900"/><circle cx="6" cy="6" r="2" fill="#101014"/></svg>
<div class="t" style="left:534px;top:351px;letter-spacing:-0.150px">Машины с пользователями</div>
<svg class="a" style="left:719px;top:350px" width="12" height="12" viewBox="0 0 12 12"><circle cx="6" cy="6" r="5" fill="#fff"/><path d="M2.100 9.900A5.500 5.500 0 0 1 9.900 2.100" fill="none" stroke="#55555e" stroke-width="1.100"/><path d="M2.800 9.200A4.500 4.500 0 0 1 9.200 2.800" fill="none" stroke="#2e2e36" stroke-width="0.900"/><path d="M9.900 2.100A5.500 5.500 0 0 1 2.100 9.900" fill="none" stroke="#f8f8fa" stroke-width="1.100"/><path d="M9.200 2.800A4.500 4.500 0 0 1 2.800 9.200" fill="none" stroke="#d4d4da" stroke-width="0.900"/></svg>
<div class="t" style="left:738px;top:351px;letter-spacing:-0.200px">Пользователи с машинами</div>
<!-- tree -->
<div class="inner" style="left:504px;top:371px;width:819px;height:195px"></div>
<div class="a" style="left:540px;top:372px;width:782px;height:18px;background:#eeeef2"></div>
<div class="a" style="left:512px;top:377.500px;border:3.500px solid transparent;border-left:4px solid #72727f;border-right:none"></div>
<div class="a" style="left:512px;top:395.500px;border:3.500px solid transparent;border-left:4px solid #72727f;border-right:none"></div>
<svg class="a" style="left:523px;top:373px" width="16" height="16" viewBox="0 0 16 16"><rect x="0.500" y="0.500" width="14.500" height="11" rx="1" fill="#e8eff6" stroke="#9cb4cc"/><rect x="2" y="2" width="11.500" height="8" fill="url(#scr)"/><rect x="6.500" y="11.500" width="2.500" height="2.300" fill="#9cb4cc"/><rect x="4" y="13.600" width="7.500" height="1.300" rx="0.600" fill="#8aa8c4"/></svg>
<svg class="a" style="left:523px;top:391px" width="16" height="16"><use href="#net"/></svg>
<div class="t" style="left:542px;top:375px;letter-spacing:-0.600px">ZECURION</div>
<div class="t" style="left:542px;top:393px">Параметры подключения к серверу</div>
<div class="btn" style="left:1329px;top:371px;width:28px;height:26px"></div>
<svg class="a" style="left:1333px;top:374.500px" width="19" height="19" viewBox="0 0 18 18"><g transform="translate(9 9) rotate(45)"><rect x="-9.300" y="-2.900" width="18.600" height="5.800" rx="1.200" fill="#e8600c" stroke="#c84c04" stroke-width="0.600"/><rect x="-2.900" y="-9.300" width="5.800" height="18.600" rx="1.200" fill="#e8600c" stroke="#c84c04" stroke-width="0.600"/><rect x="-8.800" y="-2.400" width="17.600" height="4.800" rx="1" fill="#ec6a14"/><rect x="-2.400" y="-8.800" width="4.800" height="17.600" rx="1" fill="#ec6a14"/></g></svg>
<!-- LOG -->
<div class="panel" style="left:2px;top:577px;width:1362px;height:41px"></div>
<div class="cap" style="left:8px;top:581px;letter-spacing:0.700px">Лог</div>
<div class="inner" style="left:4px;top:598px;width:1358px;height:18px"></div>
<div class="a" style="left:1344px;top:599px;width:17px;height:16px;background:#ececf0"></div>
<div class="t" style="left:5.500px;top:600px;font-weight:bold;color:#b47474;font-size:11px;letter-spacing:0.450px">12:23:17</div>
<div class="t" style="left:75px;top:600px;font-weight:bold;color:#b47474;font-size:11px;letter-spacing:0.400px">The server is not operational.</div>
<svg class="a" style="left:1323px;top:583px" width="9" height="10" viewBox="0 0 9 10"><path d="M2.500 0.500h4M3 0.500v4.500M6 0.500v4.500M5 1v4M1 5.500h7M4.500 6v3.500" stroke="#686876" stroke-width="1.100" fill="none"/></svg>
<svg class="a" style="left:1345.500px;top:583px" width="10" height="9" viewBox="0 0 10 9"><path d="M1.500 1L8.500 8M8.500 1L1.500 8" stroke="#686874" stroke-width="1.900"/></svg>
<div class="a" style="left:0;top:620px;width:1366px;height:4px;background:#d4d0c8"></div><div class="a" style="left:0;top:621px;width:1366px;height:1px;background:#fff"></div>
<!--PANELS-->
</body></html>
